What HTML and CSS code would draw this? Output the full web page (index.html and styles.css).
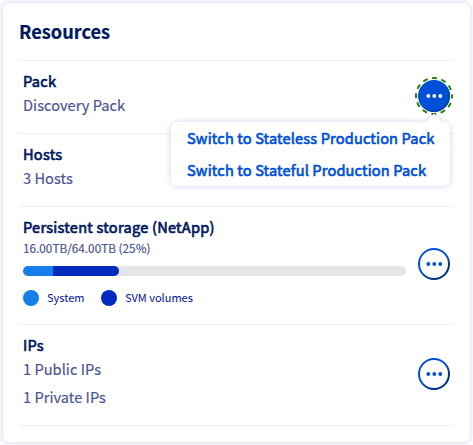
FILE: index.html
```html
<!DOCTYPE html>
<html lang="en">
<head>
<meta charset="utf-8">
<title>Resources</title>
<link rel="stylesheet" href="styles.css">
</head>
<body>
<main class="card">
  <h1 class="card-title">Resources</h1>
  <section class="row">
    <div class="content">
      <h2>Pack</h2>
      <p>Discovery Pack</p>
    </div>
    <div class="action">
      <button class="more more-active" aria-label="Pack actions">
        <svg width="32" height="32" viewBox="0 0 32 32"><g fill="currentColor"><circle cx="10.3" cy="16" r="1.9"/><circle cx="16.3" cy="16" r="1.9"/><circle cx="22.3" cy="16" r="1.9"/></g></svg>
      </button>
      <svg class="focus-ring" width="40" height="40" viewBox="0 0 40 40"><circle cx="20" cy="20" r="18" fill="none" stroke="#2b8000" stroke-width="2" stroke-dasharray="5 4.425" stroke-dashoffset="2.5"/></svg>
      <div class="menu">
        <a>Switch to Stateless Production Pack</a>
        <a>Switch to Stateful Production Pack</a>
      </div>
    </div>
  </section>
  <section class="row">
    <div class="content">
      <h2>Hosts</h2>
      <p>3 Hosts</p>
    </div>
  </section>
  <section class="row row-storage">
    <div class="content">
      <h2>Persistent storage (NetApp)</h2>
      <p class="usage">16.00TB/64.00TB (25%)</p>
      <div class="meter"><span class="system"></span><span class="svm"></span></div>
      <div class="legend">
        <span class="dot system"></span><span class="label">System</span>
        <span class="dot svm"></span><span class="label">SVM volumes</span>
      </div>
    </div>
    <div class="action">
      <button class="more" aria-label="Storage actions">
        <svg width="32" height="32" viewBox="0 0 32 32"><defs><linearGradient id="edge" x1="0.2" y1="0.1" x2="0.8" y2="0.9"><stop offset="0.45" stop-color="#0050d7"/><stop offset="0.85" stop-color="#00307f"/></linearGradient></defs><circle cx="16" cy="16" r="15" fill="none" stroke="url(#edge)" stroke-width="2"/><g fill="currentColor"><circle cx="10.3" cy="16" r="1.9"/><circle cx="16.3" cy="16" r="1.9"/><circle cx="22.3" cy="16" r="1.9"/></g></svg>
      </button>
    </div>
  </section>
  <section class="row row-ips">
    <div class="content">
      <h2>IPs</h2>
      <p>1 Public IPs</p>
      <p class="spaced">1 Private IPs</p>
    </div>
    <div class="action">
      <button class="more" aria-label="IP actions">
        <svg width="32" height="32" viewBox="0 0 32 32"><circle cx="16" cy="16" r="15" fill="none" stroke="url(#edge)" stroke-width="2"/><g fill="currentColor"><circle cx="10.3" cy="16" r="1.9"/><circle cx="16.3" cy="16" r="1.9"/><circle cx="22.3" cy="16" r="1.9"/></g></svg>
      </button>
    </div>
  </section>
</main>
</body>
</html>
```
FILE: styles.css
```css
* { box-sizing: border-box; }
body {
  margin: 0;
  padding: 3px;
  height: 445px;
  overflow: hidden;
  background: #fff;
  font-family: "Noto Sans CJK SC", "Open Sans", sans-serif;
  font-size: 14.6px;
  line-height: 24px;
  color: #4d5592;
}
h1, h2, p { margin: 0; }
.card {
  height: 439px;
  padding: 0 16px;
  border-radius: 6px;
  background: #fff;
  box-shadow: 0 0 6px rgba(0, 0, 180, .2);
}
.card-title {
  height: 57px;
  padding-top: 16px;
  font-size: 18.2px;
  line-height: 24px;
  color: #00185e;
  -webkit-text-stroke: .2px currentColor;
}
.row {
  display: flex;
  justify-content: space-between;
  height: 73px;
  padding: 8px 4px 0;
  border-top: 1px solid #efeff2;
}
.row-storage { height: 118px; }
.row-ips { height: 102px; border-bottom: 1px solid #efeff2; }
h2, .menu a {
  font-size: 14.6px;
  font-weight: 400;
  -webkit-text-stroke: .65px currentColor;
}
h2 { line-height: 24px; letter-spacing: .24px; color: #00185e; }
p { white-space: nowrap; letter-spacing: .04px; -webkit-text-stroke: .2px currentColor; }
.content { width: 383px; }
.usage { font-size: 11.7px; line-height: 18px; }
.spaced { margin-top: 4px; }
.action { position: relative; width: 32px; padding-top: 11px; }
.row-storage .action { padding-top: 33px; }
.row-ips .action { padding-top: 25px; }
.more {
  display: block;
  width: 32px;
  height: 32px;
  padding: 0;
  border: 0;
  border-radius: 50%;
  background: transparent;
  color: #0050d7;
}
.more svg { display: block; }
.more-active {
  background: #0050d7;
  color: #fff;
  box-shadow: inset -1px -1px 1px #003b9f;
}
.focus-ring { position: absolute; left: -4px; top: 7px; }
.menu {
  position: absolute;
  z-index: 1;
  top: 53px;
  right: 0;
  width: 279px;
  height: 64px;
  padding: 0 16px;
  border-radius: 6px;
  background: #fff;
  box-shadow: 0 0 6px rgba(0, 0, 180, .18);
}
.menu::before {
  content: "";
  position: absolute;
  top: -6px;
  right: 10px;
  width: 12px;
  height: 12px;
  transform: rotate(45deg);
  background: #fff;
  box-shadow: -1px -1px 2px rgba(0, 0, 160, .12);
}
.menu a {
  display: block;
  position: relative;
  height: 32px;
  line-height: 32px;
  letter-spacing: .15px;
  white-space: nowrap;
  color: #0050d7;
}
.meter {
  display: flex;
  height: 10px;
  margin-top: 9px;
  border-radius: 5px;
  overflow: hidden;
  background: #e5e5e5;
}
.system { width: 30px; background: #157eea; }
.svm { width: 66px; background: #002bbd; }
.meter .svm { border-radius: 0 5px 5px 0; }
.legend {
  display: flex;
  align-items: center;
  margin-top: 14px;
  font-size: 11px;
  line-height: 16px;
  color: #000e9c;
}
.dot { width: 16px; height: 16px; border-radius: 50%; }
.label { margin: -1px 16.5px 1px 8px; }
```
